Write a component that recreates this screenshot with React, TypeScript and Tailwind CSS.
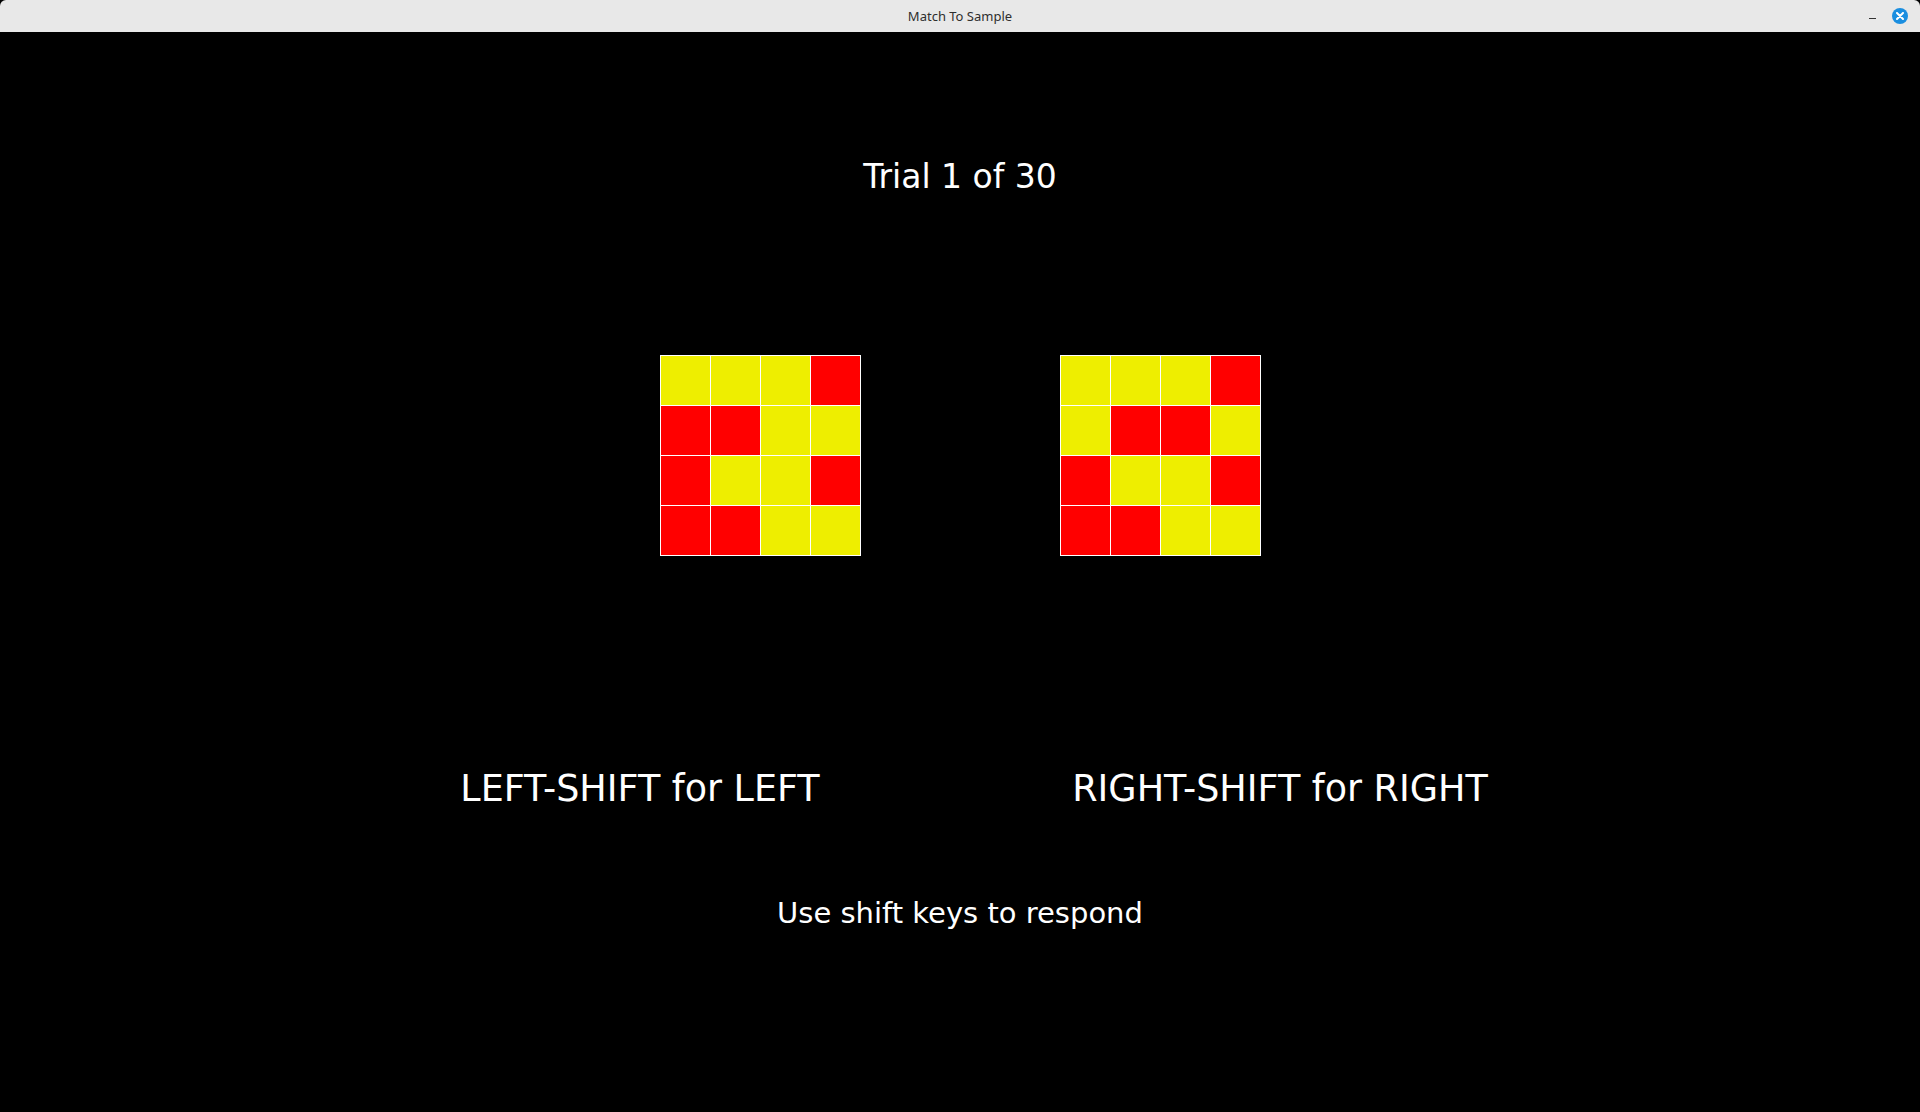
const LEFT = [
  ["y", "y", "y", "r"],
  ["r", "r", "y", "y"],
  ["r", "y", "y", "r"],
  ["r", "r", "y", "y"],
];

const RIGHT = [
  ["y", "y", "y", "r"],
  ["y", "r", "r", "y"],
  ["r", "y", "y", "r"],
  ["r", "r", "y", "y"],
];

const font = { fontFamily: '"DejaVu Sans", sans-serif' };

function Pattern({ cells }: { cells: string[][] }) {
  return (
    <div className="grid grid-cols-[repeat(4,49px)] gap-[1px] bg-white p-[1px]">
      {cells.flat().map((c, i) => (
        <div key={i} className={`h-[49px] w-[49px] ${c === "r" ? "bg-[#ff0000]" : "bg-[#eeee00]"}`} />
      ))}
    </div>
  );
}

function TitleBar() {
  return (
    <div className="relative flex h-[32px] items-center justify-center rounded-t-[6px] bg-[#e8e8e8]">
      <span className="mt-[2px] text-[13px] text-[#2e2e2e]" style={{ fontFamily: '"Noto Sans", sans-serif' }}>
        Match To Sample
      </span>
      <div className="absolute right-[12px] top-0 flex h-full items-center gap-[16px]">
        <div className="mt-[4px] h-[1px] w-[7px] bg-[#333]" />
        <div className="flex h-[16px] w-[16px] items-center justify-center rounded-full bg-[#1a8ee0]">
          <svg width="8" height="8" viewBox="0 0 8 8">
            <path d="M1 1 L7 7 M7 1 L1 7" stroke="white" strokeWidth="2" strokeLinecap="round" />
          </svg>
        </div>
      </div>
    </div>
  );
}

export default function App() {
  return (
    <div className="flex h-[1112px] w-[1920px] flex-col bg-black text-white" style={font}>
      <TitleBar />
      <div className="flex flex-1 flex-col items-center">
        <div className="mt-[128px] text-[33px] leading-none">Trial 1 of 30</div>
        <div className="mt-[162px] flex gap-[199px]">
          <Pattern cells={LEFT} />
          <Pattern cells={RIGHT} />
        </div>
        <div className="mt-[215px] flex">
          <div className="w-[640px] text-center text-[36.5px] leading-none">LEFT-SHIFT for LEFT</div>
          <div className="w-[640px] text-center text-[36.5px] leading-none">RIGHT-SHIFT for RIGHT</div>
        </div>
        <div className="mt-[91px] text-[29px] leading-none">Use shift keys to respond</div>
      </div>
    </div>
  );
}
